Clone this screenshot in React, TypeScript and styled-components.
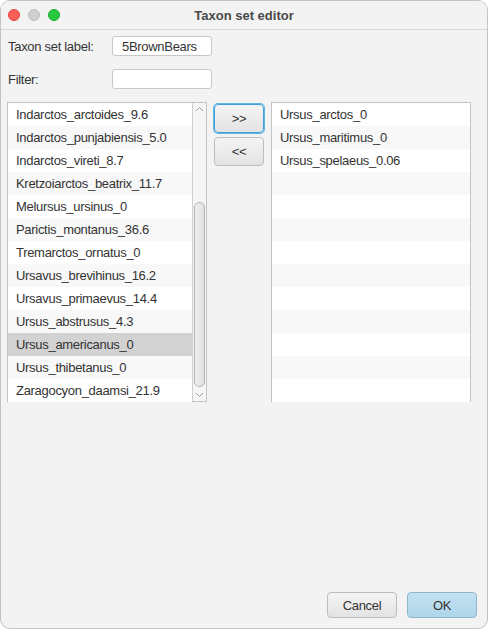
import React from "react";
import styled, { createGlobalStyle } from "styled-components";

const Global = createGlobalStyle`
  html, body { margin: 0; padding: 0; background: #ffffff; }
  body { font-family: "Liberation Sans", Arial, sans-serif; }
  * { box-sizing: border-box; }
`;

const Window = styled.div`
  width: 488px;
  height: 629px;
  background: #f3f3f3;
  border: 1px solid #c4c4c4;
  border-radius: 10px;
  display: flex;
  flex-direction: column;
  overflow: hidden;
  color: #333333;
  font-size: 13px;
  letter-spacing: -0.3px;
`;

const TitleBar = styled.div`
  height: 29px;
  flex: none;
  display: grid;
  grid-template-columns: 80px 1fr 80px;
  align-items: center;
  border-bottom: 1px solid #d8d8d8;
  background: #f3f3f3;
`;

const Lights = styled.div`
  display: flex;
  gap: 8px;
  padding-left: 7px;
`;

const Light = styled.span<{ $c: string; $b: string }>`
  width: 12px;
  height: 12px;
  border-radius: 50%;
  background: ${(p) => p.$c};
  border: 0.5px solid ${(p) => p.$b};
`;

const Title = styled.div`
  text-align: center;
  font-weight: bold;
  font-size: 13px;
  color: #4a4a4a;
  letter-spacing: 0;
`;

const Body = styled.div`
  flex: 1;
  display: flex;
  flex-direction: column;
  padding: 6px 10px 10px 6px;
`;

const Form = styled.div`
  display: grid;
  grid-template-columns: 105px 100px;
  row-gap: 13px;
  align-items: center;
`;

const Label = styled.div`
  padding-left: 1px;
  font-size: 13px;
  color: #333;
`;

const Field = styled.div`
  height: 20px;
  background: #ffffff;
  border: 1px solid #c8c8c8;
  border-radius: 3px;
  padding: 0 9px;
  display: flex;
  align-items: center;
  font-size: 13px;
  color: #333;
`;

const Lists = styled.div`
  margin-top: 13px;
  display: flex;
  gap: 7px;
  align-items: flex-start;
`;

const ListBox = styled.div`
  width: 200px;
  height: 300px;
  border: 1px solid #c4c4c4;
  background: #ffffff;
  display: flex;
`;

const Rows = styled.div`
  flex: 1;
  display: flex;
  flex-direction: column;
`;

const Row = styled.div<{ $alt: boolean; $sel?: boolean }>`
  height: 23px;
  flex: none;
  padding-left: 8px;
  display: flex;
  align-items: center;
  white-space: nowrap;
  font-size: 13px;
  color: #333;
  background: ${(p) => (p.$sel ? "#d2d2d2" : p.$alt ? "#f8f8f8" : "#ffffff")};
`;

const ScrollTrack = styled.div`
  width: 14px;
  flex: none;
  border-left: 1px solid #d0d0d0;
  background: #f6f6f6;
  display: flex;
  flex-direction: column;
  align-items: center;
  padding: 0 1px;
`;

const Arrow = styled.div`
  height: 12px;
  flex: none;
  display: flex;
  align-items: center;
  justify-content: center;
`;

const ThumbArea = styled.div`
  flex: 1;
  width: 100%;
  display: flex;
  flex-direction: column;
  padding-top: 87px;
  padding-bottom: 2px;
`;

const Thumb = styled.div`
  flex: 1;
  border: 1px solid #b4b4b4;
  border-radius: 5px;
  background: linear-gradient(to right, #eeeeee, #e2e2e2);
`;

const ButtonCol = styled.div`
  width: 50px;
  display: flex;
  flex-direction: column;
  gap: 4px;
  padding-top: 2px;
`;

const Btn = styled.button<{ $focus?: boolean; $default?: boolean; $w?: number; $h?: number }>`
  width: ${(p) => p.$w ?? 50}px;
  height: ${(p) => p.$h ?? 29}px;
  border-radius: 4px;
  border: 1px solid ${(p) => (p.$focus ? "#3fa1d9" : p.$default ? "#8fb7cc" : "#bdbdbd")};
  box-shadow: ${(p) => (p.$focus ? "0 0 0 1px #62b6e6" : "none")};
  background: ${(p) =>
    p.$default
      ? "linear-gradient(#c3e2f2, #afd5ea)"
      : "linear-gradient(#f4f4f4, #e3e3e3)"};
  font-family: "Liberation Sans", Arial, sans-serif;
  font-size: 13px;
  letter-spacing: -0.3px;
  color: #333;
  padding: 0;
  display: flex;
  align-items: center;
  justify-content: center;
`;

const Footer = styled.div`
  margin-top: auto;
  display: flex;
  justify-content: flex-end;
  gap: 10px;
`;

const left = [
  "Indarctos_arctoides_9.6",
  "Indarctos_punjabiensis_5.0",
  "Indarctos_vireti_8.7",
  "Kretzoiarctos_beatrix_11.7",
  "Melursus_ursinus_0",
  "Parictis_montanus_36.6",
  "Tremarctos_ornatus_0",
  "Ursavus_brevihinus_16.2",
  "Ursavus_primaevus_14.4",
  "Ursus_abstrusus_4.3",
  "Ursus_americanus_0",
  "Ursus_thibetanus_0",
  "Zaragocyon_daamsi_21.9",
];

const right = ["Ursus_arctos_0", "Ursus_maritimus_0", "Ursus_spelaeus_0.06"];

const Chevron = ({ up }: { up: boolean }) => (
  <svg width="9" height="6" viewBox="0 0 9 6">
    <path
      d={up ? "M1 5 L4.5 1.5 L8 5" : "M1 1 L4.5 4.5 L8 1"}
      fill="none"
      stroke="#9a9a9a"
      strokeWidth="1"
    />
  </svg>
);

export default function App() {
  const rightRows = Array.from({ length: 13 }, (_, i) => right[i] ?? "");
  return (
    <>
      <Global />
      <Window>
        <TitleBar>
          <Lights>
            <Light $c="#fe5f57" $b="#e0443e" />
            <Light $c="#cfcfcf" $b="#bdbdbd" />
            <Light $c="#28c840" $b="#1aab29" />
          </Lights>
          <Title>Taxon set editor</Title>
          <div />
        </TitleBar>
        <Body>
          <Form>
            <Label>Taxon set label:</Label>
            <Field>5BrownBears</Field>
            <Label>Filter:</Label>
            <Field />
          </Form>
          <Lists>
            <ListBox>
              <Rows>
                {left.map((t, i) => (
                  <Row key={t} $alt={i % 2 === 1} $sel={t === "Ursus_americanus_0"}>
                    {t}
                  </Row>
                ))}
              </Rows>
              <ScrollTrack>
                <Arrow>
                  <Chevron up />
                </Arrow>
                <ThumbArea>
                  <Thumb />
                </ThumbArea>
                <Arrow>
                  <Chevron up={false} />
                </Arrow>
              </ScrollTrack>
            </ListBox>
            <ButtonCol>
              <Btn $focus>&gt;&gt;</Btn>
              <Btn>&lt;&lt;</Btn>
            </ButtonCol>
            <ListBox>
              <Rows>
                {rightRows.map((t, i) => (
                  <Row key={i} $alt={i % 2 === 1}>
                    {t}
                  </Row>
                ))}
              </Rows>
            </ListBox>
          </Lists>
          <Footer>
            <Btn $w={70} $h={26}>Cancel</Btn>
            <Btn $w={70} $h={26} $default>OK</Btn>
          </Footer>
        </Body>
      </Window>
    </>
  );
}
